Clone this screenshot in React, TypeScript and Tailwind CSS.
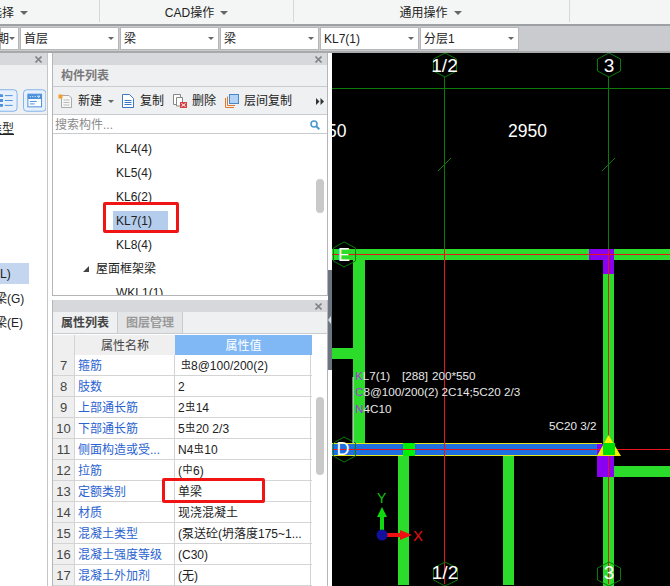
const font = { fontFamily: '"Liberation Sans", "Noto Sans CJK SC", sans-serif' };

const combos = [
  { label: "期", w: "w-[19px]" },
  { label: "首层", w: "w-[99px]" },
  { label: "梁", w: "w-[99px]" },
  { label: "梁", w: "w-[99px]" },
  { label: "KL7(1)", w: "w-[99px]" },
  { label: "分层1", w: "w-[99px]" },
];

const treeItems = ["KL4(4)", "KL5(4)", "KL6(2)", "KL7(1)", "KL8(4)"];

const rows = [
  { n: 7, name: "箍筋", value: "#8@100/200(2)" },
  { n: 8, name: "肢数", value: "2" },
  { n: 9, name: "上部通长筋", value: "2#14" },
  { n: 10, name: "下部通长筋", value: "5#20 2/3" },
  { n: 11, name: "侧面构造或受...", value: "N4#10" },
  { n: 12, name: "拉筋", value: "(^6)" },
  { n: 13, name: "定额类别", value: "单梁" },
  { n: 14, name: "材质", value: "现浇混凝土" },
  { n: 15, name: "混凝土类型", value: "(泵送砼(坍落度175~1..." },
  { n: 16, name: "混凝土强度等级", value: "(C30)" },
  { n: 17, name: "混凝土外加剂", value: "(无)" },
];

function Caret({ small }: { small?: boolean }) {
  return small ? (
    <span className="inline-block shrink-0 w-0 h-0 border-x-[3px] border-x-transparent border-t-[3px] border-t-[#666]" />
  ) : (
    <span className="inline-block shrink-0 w-0 h-0 border-x-[4px] border-x-transparent border-t-[4px] border-t-[#666]" />
  );
}

function CloseX() {
  return (
    <svg width="7" height="7" viewBox="0 0 7 7">
      <path d="M0.5 0.5L6.5 6.5M6.5 0.5L0.5 6.5" stroke="#858585" strokeWidth="1.6" />
    </svg>
  );
}

// # = grade three bar symbol, ^ = plain bar symbol, both raised small glyphs
function RebarValue({ text }: { text: string }) {
  const parts = text.split(/([#^])/);
  return (
    <span className="flex items-center whitespace-nowrap">
      {parts.map((p, i) =>
        p === "#" ? (
          <span key={i} className={`text-[10px] -translate-y-[2px] text-center ${i === 1 && parts[0] === "" ? "w-[13px] pl-[3px]" : "w-[11px]"}`}>虫</span>
        ) : p === "^" ? (
          <span key={i} className="text-[10px] -translate-y-[2px] w-[11px] text-center">中</span>
        ) : (
          <span key={i}>{p}</span>
        )
      )}
    </span>
  );
}

function Canvas() {
  const green = "#2bdc2b";
  const axis = "#0a7a0a";
  const red = "#e8141c";
  return (
    <svg width="338" height="533" viewBox="332 53 338 533" className="block shrink-0" style={{ fontFamily: '"Liberation Sans", sans-serif' }}>
      <rect x="332" y="53" width="338" height="533" fill="#000" />
      {/* axes */}
      <line x1="332" y1="88.5" x2="670" y2="88.5" stroke={axis} />
      <line x1="444.5" y1="77" x2="444.5" y2="249" stroke={axis} />
      <line x1="608.5" y1="77" x2="608.5" y2="249" stroke={axis} />
      <line x1="438" y1="171" x2="451" y2="158" stroke={axis} />
      <line x1="602" y1="171" x2="615" y2="158" stroke={axis} />
      {/* green beams */}
      <rect x="332" y="249" width="338" height="11" fill={green} />
      <rect x="353" y="249" width="12" height="195" fill={green} />
      <rect x="332" y="348" width="24" height="11" fill={green} />
      <rect x="603" y="249" width="11" height="337" fill={green} />
      <rect x="398" y="455" width="11" height="130" fill={green} />
      <rect x="503" y="455" width="11" height="130" fill={green} />
      <rect x="614" y="466" width="56" height="11" fill={green} />
      {/* purple columns */}
      <path d="M589 249H614V274H603V260H589Z" fill="#8a00f0" />
      <rect x="597" y="456" width="17" height="21" fill="#8a00f0" />
      {/* selected beam */}
      <rect x="332" y="443" width="270" height="13" fill="#e6e61e" />
      <rect x="332" y="444" width="270" height="11" fill="#1f6fe0" />
      <rect x="403" y="443" width="12" height="13" fill="#00f000" />
      <rect x="597" y="444" width="6" height="11" fill="#8a00f0" />
      {/* red axes */}
      <line x1="332" y1="254.5" x2="670" y2="254.5" stroke={red} />
      <line x1="332" y1="449.5" x2="670" y2="449.5" stroke={red} />
      <line x1="444.5" y1="249" x2="444.5" y2="584" stroke={red} />
      <line x1="608.5" y1="249" x2="608.5" y2="584" stroke={red} />
      {/* grip */}
      <path d="M608.5 435L621 456H597Z" fill="#f5f000" />
      <rect x="603" y="443" width="12" height="12" fill="#00e000" />
      {/* axis bubbles */}
      <g fill="none" stroke={axis}>
        <polygon points="445,53 456.5,59 456.5,71 445,77 433.5,71 433.5,59" />
        <polygon points="609,53 620.5,59 620.5,71 609,77 597.5,71 597.5,59" />
        <polygon points="344,242 355.5,248 355.5,261 344,267 333.5,261 333.5,248" />
        <polygon points="344,437 355.5,443 355.5,456 344,462 333.5,456 333.5,443" />
        <polygon points="445,562 457.5,568 457.5,580 445,586 433.5,580 433.5,568" />
        <polygon points="609,562 620.5,568 620.5,580 609,586 597.5,580 597.5,568" />
      </g>
      <g fill="#fff" fontSize="19" textAnchor="middle">
        <text x="444.5" y="72">1/2</text>
        <text x="609" y="72">3</text>
        <text x="344" y="261" fontSize="18">E</text>
        <text x="343" y="455" fontSize="18">D</text>
        <text x="445" y="579">1/2</text>
        <text x="609" y="579">3</text>
      </g>
      <g fill="#fff" fontSize="17.5">
        <text x="508" y="137">2950</text>
        <text x="327" y="137">50</text>
      </g>
      {/* labels */}
      <g fill="#e8e8e8" fontSize="11.7">
        <text x="355" y="380">
          <tspan fill="#b030e0">K</tspan>L7(1)
          <tspan x="402">[288]</tspan>
          <tspan x="432">200*550</tspan>
        </text>
        <text x="355" y="396"><tspan fill="#b030e0">C</tspan>8@100/200(2) 2C14;5C20 2/3</text>
        <text x="355" y="413"><tspan fill="#b030e0">N</tspan>4C10</text>
        <text x="549" y="430">5C20 3/2</text>
      </g>
      <line x1="353" y1="377" x2="353" y2="443" stroke="#e8e8e8" />
      {/* ucs */}
      <rect x="380" y="517" width="4" height="14" fill="#10d810" />
      <path d="M382 507L387 517H377Z" fill="#10d810" />
      <rect x="387" y="533" width="14" height="4" fill="#f01010" />
      <path d="M412 535L400 530V540Z" fill="#f01010" />
      <circle cx="382" cy="535" r="5.5" fill="#10109a" />
      <text x="377" y="503" fill="#10c810" fontSize="14">Y</text>
      <text x="413" y="541" fill="#e81010" fontSize="15">X</text>
    </svg>
  );
}

export default function App() {
  return (
    <div className="w-[670px] h-[586px] overflow-hidden bg-white text-[12px] text-[#222] flex flex-col" style={font}>
      {/* ribbon group labels */}
      <div className="h-[26px] shrink-0 flex items-start bg-[#f4f6f6] border-b-2 border-[#9ea1a3] overflow-hidden">
        <div className="w-[100px] h-[22px] flex items-center gap-[6px] border-r border-[#d5d7d9] pt-[3px]">
          <span className="-ml-[10px]">选择</span>
          <Caret />
        </div>
        <div className="w-[194px] h-[22px] flex items-center justify-center gap-[6px] border-r border-[#d5d7d9] pt-[3px]">
          <span>CAD操作</span>
          <Caret />
        </div>
        <div className="w-[276px] h-[22px] flex items-center justify-center gap-[6px] pr-[2px] border-r border-[#d5d7d9] pt-[3px]">
          <span>通用操作</span>
          <Caret />
        </div>
      </div>

      {/* combo row */}
      <div className="h-[27px] shrink-0 flex items-center gap-[1px] bg-[#c9cbce] border-b-2 border-[#a7a9ab] overflow-hidden">
        {combos.map((c, i) => (
          <div
            key={i}
            className={`${c.w} h-[23px] bg-white border border-[#b5b7b9] flex items-center justify-between pl-[3px] pr-[4px] shrink-0`}
          >
            <span className={`pt-[1px] ${i === 0 ? "-ml-[7px]" : ""}`}>{c.label}</span>
            <Caret small />
          </div>
        ))}
      </div>

      <div className="flex flex-1 min-h-0">
        {/* left navigation panel */}
        <div className="w-[48px] shrink-0 flex flex-col border-r border-[#c3c5c7] overflow-hidden">
          <div className="h-[12px] shrink-0 bg-[#d6d8dc] flex items-center justify-end pr-[5px]"><CloseX /></div>
          <div className="h-[50px] shrink-0 bg-[#eef0f1] border-b border-[#c9cbce] flex items-end justify-end gap-[5px] pr-[1px] pb-[2px]">
            <svg width="18" height="23" viewBox="0 0 18 23">
              <path d="M-4 .5H14A3.5 3.5 0 0 1 17.5 4V19A3.5 3.5 0 0 1 14 22.5H-4Z" fill="#e8f1fb" stroke="#7fb2ea" />
              <path d="M0 5H3V8H0ZM0 10H3V13H0ZM0 15H3V18H0Z" fill="#4a90dc" />
              <path d="M5 6.5H13M5 11.5H13M5 16.5H13" stroke="#4a90dc" />
            </svg>
            <svg width="24" height="23" viewBox="0 0 24 23">
              <rect x=".5" y=".5" width="23" height="22" rx="3.5" fill="#e8f1fb" stroke="#7fb2ea" />
              <rect x="5" y="5" width="14" height="13" fill="#fff" stroke="#4a90dc" />
              <rect x="5" y="5" width="14" height="5" fill="#4a90dc" />
              <path d="M7 7.5H8M9.5 7.5H10.5M12 7.5H13M15 7L17 7L16 8.5Z" stroke="#fff" />
              <path d="M7 12.5H14M7 15H12" stroke="#4a90dc" />
            </svg>
          </div>
          <div className="h-[148px] shrink-0 pt-[5px] whitespace-nowrap -ml-[10px]">
            <span className="underline">类型</span>
          </div>
          <div className="h-[21px] shrink-0 w-[29px] bg-[#c4d6ef] flex items-center">L)</div>
          <div className="h-[26px] shrink-0 flex items-center whitespace-nowrap -ml-[5px] pt-[3px]">梁(G)</div>
          <div className="h-[24px] shrink-0 flex items-center whitespace-nowrap -ml-[5px] pt-[2px]">梁(E)</div>
        </div>
        <div className="w-[4px] shrink-0 bg-white" />

        {/* middle panels */}
        <div className="w-[276px] shrink-0 flex flex-col">
          <div className="h-[243px] shrink-0 flex flex-col border-x border-b border-[#b3b5b8] overflow-hidden">
            <div className="h-[12px] bg-[#d6d8dc] flex items-center justify-end pr-[5px] shrink-0"><CloseX /></div>
            <div className="h-[22px] bg-[#eef0f1] flex items-center pl-[8px] pt-[1px] font-bold text-[#7a7a7a] border-b border-[#c9cbce] shrink-0">构件列表</div>
            <div className="h-[28px] bg-[#eef0f1] flex items-center pl-[5px] pr-[3px] pt-[1px] border-b border-[#c9cbce] shrink-0 whitespace-nowrap">
              <svg width="15" height="15" viewBox="0 0 15 15" className="mr-[5px] shrink-0">
                <path d="M3.5 1.5H11L13.5 4V13.5H3.5Z" fill="#f7f7f7" stroke="#aaa" />
                <path d="M5.5 6H11.5M5.5 8.5H11.5M5.5 11H11.5" stroke="#bbb" />
                <rect x="0.5" y="0.5" width="4" height="4" fill="#f0a030" />
              </svg>
              <span>新建</span>
              <span className="ml-[6px] mr-[8px] flex"><Caret small /></span>
              <svg width="12" height="14" viewBox="0 0 12 14" className="mr-[6px] shrink-0">
                <path d="M.5 .5H7.5L11.5 4.5V13.5H.5Z" fill="#fff" stroke="#3c78c0" />
                <path d="M2.5 6.5H9.5M2.5 8.5H9.5M2.5 10.5H9.5" stroke="#3c78c0" />
              </svg>
              <span>复制</span>
              <svg width="14" height="14" viewBox="0 0 14 14" className="ml-[9px] mr-[5px] shrink-0">
                <path d="M0.5 0.5H7.5V10.5H0.5Z" fill="#fff" stroke="#888" />
                <path d="M3.5 3.5H9.5V12H3.5Z" fill="#fff" stroke="#888" />
                <rect x="7" y="8" width="7" height="6" fill="#d84040" />
                <path d="M8.5 9.5L12.5 12.5M12.5 9.5L8.5 12.5" stroke="#fff" />
              </svg>
              <span>删除</span>
              <svg width="14" height="14" viewBox="0 0 14 14" className="ml-[9px] mr-[5px] shrink-0">
                <path d="M.5 4V13.5H9" fill="none" stroke="#e07830" />
                <path d="M2.5 2.5V11.5H10" fill="none" stroke="#e07830" />
                <rect x="4.5" y="0.5" width="9" height="9" fill="#b4d2f5" stroke="#4a86c8" />
              </svg>
              <span>层间复制</span>
              <svg width="8" height="7" viewBox="0 0 8 7" className="ml-auto shrink-0">
                <path d="M0 0L3.5 3.5L0 7ZM4.5 0L8 3.5L4.5 7Z" fill="#333" />
              </svg>
            </div>
            <div className="h-[19px] bg-white flex items-center justify-between pl-[2px] pr-[7px] pt-[1px] border-b border-[#c9cbce] text-[#8a8a8a] shrink-0">
              <span>搜索构件...</span>
              <svg width="10" height="10" viewBox="0 0 10 10">
                <circle cx="4" cy="4" r="3" fill="none" stroke="#4a9ad0" strokeWidth="1.6" />
                <path d="M6.3 6.3L9.3 9.3" stroke="#4a9ad0" strokeWidth="2" />
              </svg>
            </div>
            <div className="relative flex-1 bg-white overflow-hidden">
              <div className="flex flex-col pt-[3px]">
                {treeItems.map((t) => (
                  <div key={t} className="h-[24px] shrink-0 flex items-center pl-[60px]">
                    <span className={`h-[20px] flex items-center px-[3px] w-[55px] ${t === "KL7(1)" ? "bg-[#b4cdec]" : ""}`}>{t}</span>
                  </div>
                ))}
                <div className="h-[24px] shrink-0 flex items-center pl-[30px] gap-[7px]">
                  <span className="w-0 h-0 border-l-[6px] border-l-transparent border-b-[6px] border-b-[#444]" />
                  <span>屋面框架梁</span>
                </div>
                <div className="h-[24px] shrink-0 flex items-center pl-[63px]">WKL1(1)</div>
              </div>
              <div className="absolute right-[3px] top-[45px] w-[8px] h-[34px] rounded bg-[#c9c9c9]" />
              {/* red note frame */}
              <div className="absolute left-[50px] top-[68px] w-[76px] h-[31px] rounded-[2px] border-[3px] border-[#f01414]" />
            </div>
          </div>
          <div className="h-[4px] shrink-0 bg-white" />

          <div className="flex-1 min-h-0 flex flex-col border-x border-[#b3b5b8] overflow-hidden">
            <div className="h-[12px] bg-[#d6d8dc] flex items-center justify-end pr-[5px] shrink-0"><CloseX /></div>
            <div className="h-[22px] bg-[#eef0f1] flex items-stretch border-b border-[#c9cbce] shrink-0">
              <div className="w-[65px] flex items-center justify-center pt-[1px] font-bold text-[#444] border-r border-[#c9cbce]">属性列表</div>
              <div className="w-[65px] flex items-center justify-center pt-[1px] font-bold text-[#999] bg-[#e3e5e7] border-r border-[#c9cbce]">图层管理</div>
            </div>
            <div className="relative flex-1 bg-white overflow-hidden pt-[1px]">
              <div className="w-[259px]">
                <div className="h-[20px] flex">
                  <div className="w-[22px] bg-[#efefef] border-r border-[#d4d4d4]" />
                  <div className="w-[100px] bg-[#efefef] flex items-center justify-center pt-[1px] text-[#444]">属性名称</div>
                  <div className="w-[137px] bg-[#7fb8f5] flex items-center justify-center pt-[1px] text-white">属性值</div>
                </div>
                {rows.map((r) => (
                  <div key={r.n} className="h-[21px] flex border-b border-[#d4d4d4] whitespace-nowrap">
                    <div className="w-[22px] bg-[#efefef] border-r border-[#d4d4d4] flex items-center justify-center pt-[2px] text-[#444] text-[13px]">{r.n}</div>
                    <div className="w-[100px] border-r border-[#d4d4d4] flex items-center pl-[3px] pt-[2px] text-[#2a62d0]">{r.name}</div>
                    <div className="w-[136px] flex items-center pl-[3px] pt-[2px] border-r border-[#d4d4d4] overflow-hidden">
                      <RebarValue text={r.value} />
                    </div>
                  </div>
                ))}
              </div>
              <div className="absolute right-[3px] top-[63px] w-[8px] h-[78px] rounded bg-[#c9c9c9]" />
              {/* red note frame */}
              <div className="absolute left-[109px] top-[144px] w-[103px] h-[25px] rounded-[2px] border-[3px] border-[#f01414]" />
            </div>
          </div>
        </div>

        {/* splitter with collapse handle */}
        <div className="relative w-[4px] shrink-0 bg-white">
          <div className="absolute left-0 top-[217px] w-[4px] h-[100px] bg-[#6a7580] flex items-center">
            <span className="w-0 h-0 border-y-[4px] border-y-transparent border-r-[3px] border-r-[#ddd]" />
          </div>
        </div>
        <Canvas />
      </div>
    </div>
  );
}
